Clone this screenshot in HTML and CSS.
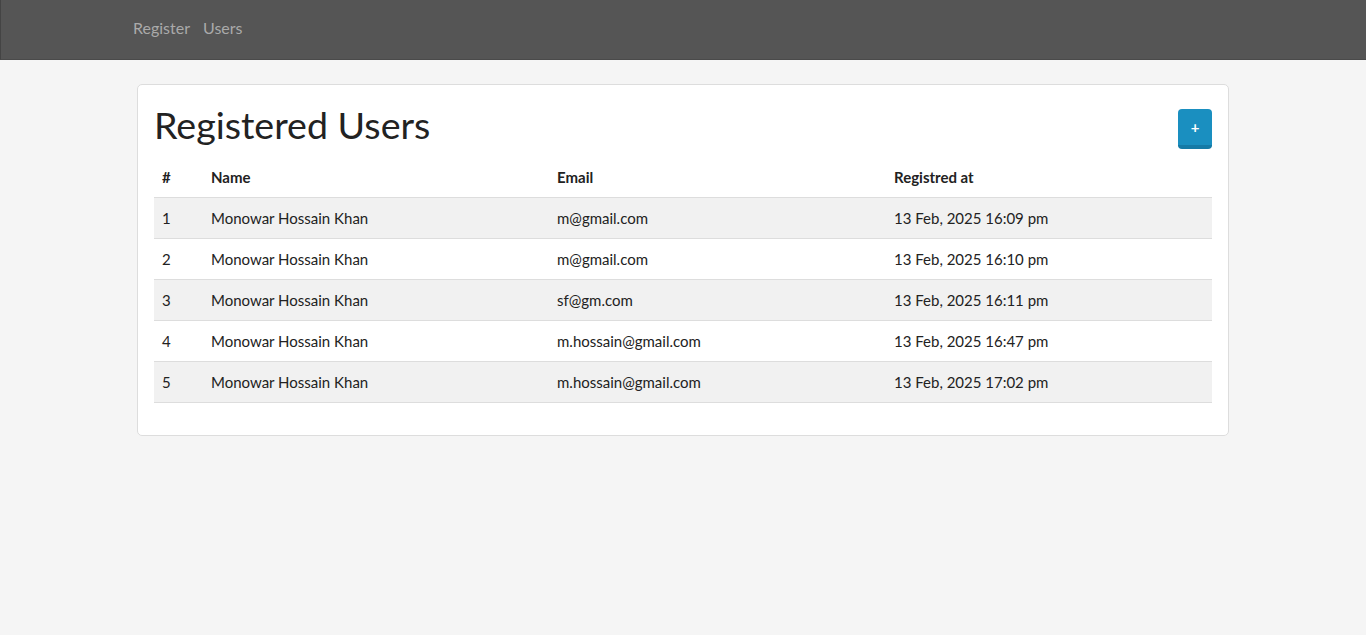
FILE: index.html
```html
<!DOCTYPE html>
<html>
<head>
<meta charset="utf-8">
<link rel="stylesheet" href="styles.css">
</head>
<body>
<nav class="navbar">
  <div class="nav-inner">
    <a class="nav-link" href="#">Register</a>
    <a class="nav-link" href="#">Users</a>
  </div>
</nav>
<main class="container">
  <section class="card">
    <div class="card-head">
      <h1 class="title">Registered Users</h1>
      <button class="add-btn">+</button>
    </div>
    <table class="users">
      <thead>
        <tr><th class="c-num">#</th><th class="c-name">Name</th><th class="c-email">Email</th><th class="c-date">Registred at</th></tr>
      </thead>
      <tbody>
        <tr><td>1</td><td>Monowar Hossain Khan</td><td>m@gmail.com</td><td>13 Feb, 2025 16:09 pm</td></tr>
        <tr><td>2</td><td>Monowar Hossain Khan</td><td>m@gmail.com</td><td>13 Feb, 2025 16:10 pm</td></tr>
        <tr><td>3</td><td>Monowar Hossain Khan</td><td>sf@gm.com</td><td>13 Feb, 2025 16:11 pm</td></tr>
        <tr><td>4</td><td>Monowar Hossain Khan</td><td>m.hossain@gmail.com</td><td>13 Feb, 2025 16:47 pm</td></tr>
        <tr><td>5</td><td>Monowar Hossain Khan</td><td>m.hossain@gmail.com</td><td>13 Feb, 2025 17:02 pm</td></tr>
      </tbody>
    </table>
  </section>
</main>
</body>
</html>
```
FILE: styles.css
```css
* { box-sizing: border-box; }
html, body { margin: 0; padding: 0; }
body {
  background: #f5f5f5;
  font-family: "Lato", "Open Sans", sans-serif;
  font-size: 15px;
  color: #222;
}
.navbar {
  height: 60px;
  background: #555;
  border-left: 1px solid #444;
  border-bottom: 1px solid #4a4a4a;
}
.nav-inner {
  width: 1101px;
  margin: 0 auto;
  display: flex;
  gap: 13px;
  height: 100%;
  align-items: center;
}
.nav-link {
  color: #aaa;
  text-decoration: none;
  font-size: 16px;
  padding-bottom: 4px;
}
.container {
  width: 1092px;
  margin: 24px auto 0;
}
.card {
  background: #fff;
  border: 1px solid #ddd;
  border-radius: 5px;
  padding: 16px 16px 32px;
}
.card-head {
  display: flex;
  justify-content: space-between;
  align-items: flex-start;
}
.title {
  margin: 0;
  font-weight: 400;
  font-size: 37.6px;
  line-height: 48px;
  color: #222;
  padding-top: 0;
}
.add-btn {
  width: 34px;
  height: 40px;
  margin-top: 8px;
  background: #1a8fc0;
  border: none;
  border-bottom: 4px solid #157aa6;
  border-radius: 4px;
  color: #fff;
  font-weight: 700;
  font-size: 15px;
  font-family: inherit;
  padding: 0;
}
.users {
  width: 100%;
  border-collapse: collapse;
  margin-top: 9px;
}
.users th {
  text-align: left;
  font-weight: 700;
  padding: 8px 8px;
  height: 39px;
  border-bottom: 1px solid #ddd;
}
.users td {
  padding: 8px 8px;
  height: 41px;
  border-bottom: 1px solid #ddd;
}
.users tbody tr:nth-child(odd) { background: #f1f1f1; }
.c-num { width: 49px; }
.c-name { width: 346px; }
.c-email { width: 337px; }
```
